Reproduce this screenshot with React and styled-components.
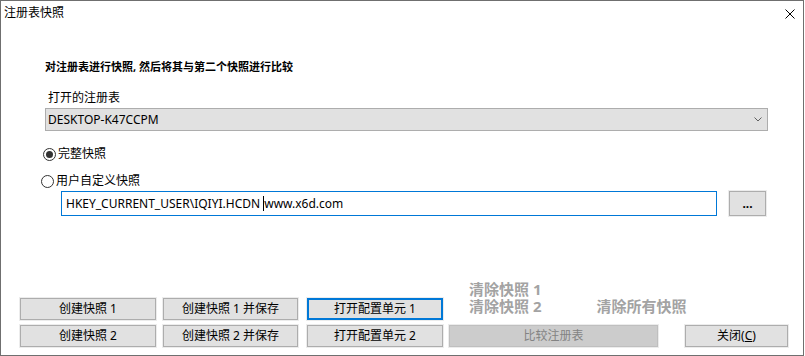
import React from 'react'
import styled, { createGlobalStyle } from 'styled-components'

const GlobalStyle = createGlobalStyle`
  html, body {
    margin: 0;
    padding: 0;
    background: #fff;
  }
  body {
    font-family: "Noto Sans", "Noto Sans CJK SC", sans-serif;
    font-size: 12px;
    color: #000;
  }
`

const Window = styled.div`
  box-sizing: border-box;
  width: 804px;
  height: 356px;
  border: 1px solid #6f6f6f;
  background: #fff;
  display: flex;
  flex-direction: column;
`

const TitleBar = styled.div`
  height: 24px;
  display: flex;
  align-items: center;
  justify-content: space-between;
  padding: 0 8px 0 3px;
`

const Title = styled.div`
  font-size: 12px;
  line-height: 16px;
`

const CloseIcon = styled.svg`
  width: 10px;
  height: 10px;
  margin-top: 2px;
`

const Content = styled.div`
  padding-left: 44px;
  display: flex;
  flex-direction: column;
  align-items: flex-start;
`

const Intro = styled.div`
  margin-top: 34px;
  font-size: 11px;
  font-weight: bold;
  line-height: 16px;
`

const FieldLabel = styled.div`
  margin: 15px 0 0 3px;
  line-height: 16px;
`

const Combo = styled.div`
  box-sizing: border-box;
  margin-top: 2px;
  width: 723px;
  height: 23px;
  border: 1px solid #adadad;
  background: #e1e1e1;
  display: flex;
  align-items: center;
  justify-content: space-between;
  padding: 0 5px 0 2px;
`

const Radio = styled.div`
  display: flex;
  align-items: center;
  gap: 2px;
  line-height: 16px;
  margin-top: ${p => p.$top}px;
  margin-left: ${p => p.$shift}px;
`

const RadioMark = styled.span`
  box-sizing: border-box;
  width: 13px;
  height: 13px;
  border: 1px solid #333;
  border-radius: 50%;
  display: flex;
  align-items: center;
  justify-content: center;

  &::after {
    content: '';
    width: 7px;
    height: 7px;
    border-radius: 50%;
    background: ${p => (p.$checked ? '#333' : 'transparent')};
  }
`

const PathRow = styled.div`
  display: flex;
  margin: 2px 0 0 16px;
`

const PathInput = styled.div`
  box-sizing: border-box;
  width: 656px;
  height: 25px;
  border: 1px solid #0078d7;
  padding-left: 4px;
  line-height: 23px;
  white-space: pre;
`

const Caret = styled.span`
  display: inline-block;
  width: 1px;
  height: 15px;
  background: #000;
  vertical-align: -3px;
`

const Button = styled.button`
  box-sizing: border-box;
  width: ${p => p.$w}px;
  height: ${p => p.$h || 22}px;
  margin: 0 0 0 ${p => p.$gap || 0}px;
  padding: 0;
  border: ${p => (p.$focused ? '2px solid #0078d7' : `1px solid ${p.disabled ? '#bfbfbf' : '#adadad'}`)};
  box-shadow: 0 0 0 1px #ececec;
  background: ${p => (p.disabled ? '#cccccc' : '#e1e1e1')};
  color: ${p => (p.disabled ? '#838383' : '#000')};
  font-family: "Noto Sans", "Noto Sans CJK SC", sans-serif;
  font-size: 12px;
  font-weight: ${p => (p.$bold ? 'bold' : 'normal')};
  line-height: 16px;
  white-space: pre;
`

const Footer = styled.div`
  margin-top: auto;
  padding: 0 0 8px 19px;
  display: flex;
  flex-direction: column;
  gap: 5px;
`

const ButtonRow = styled.div`
  display: flex;
  align-items: flex-end;
`

const ClearArea = styled.div`
  margin-left: 26px;
  padding-bottom: 5px;
  display: flex;
  flex-direction: column;
`

const ClearLine = styled.div`
  display: flex;
  gap: 55px;
`

const ClearLink = styled.span`
  font-size: 15px;
  font-weight: bold;
  line-height: 17px;
  color: #a3a3a3;
  white-space: pre;
`

export default function App () {
  return (
    <>
      <GlobalStyle />
      <Window>
        <TitleBar>
          <Title>注册表快照</Title>
          <CloseIcon viewBox="0 0 10 10">
            <path d="M0.5 0.5 L9.5 9.5 M9.5 0.5 L0.5 9.5" stroke="#000" strokeWidth="1" fill="none" />
          </CloseIcon>
        </TitleBar>

        <Content>
          <Intro>对注册表进行快照, 然后将其与第二个快照进行比较</Intro>
          <FieldLabel>打开的注册表</FieldLabel>
          <Combo>
            <span>DESKTOP-K47CCPM</span>
            <svg width="8" height="5" viewBox="0 0 8 5">
              <path d="M0.5 0.5 L4 4 L7.5 0.5" stroke="#606060" strokeWidth="1" fill="none" />
            </svg>
          </Combo>

          <Radio $top={15} $shift={-2}>
            <RadioMark $checked />
            <span>完整快照</span>
          </Radio>
          <Radio $top={11} $shift={-4}>
            <RadioMark />
            <span>用户自定义快照</span>
          </Radio>

          <PathRow>
            <PathInput>HKEY_CURRENT_USER\IQIYI.HCDN <Caret />www.x6d.com</PathInput>
            <Button $w={37} $h={25} $gap={12} $bold>...</Button>
          </PathRow>
        </Content>

        <Footer>
          <ButtonRow>
            <Button $w={136}>创建快照 1</Button>
            <Button $w={135} $gap={7}>创建快照 1 并保存</Button>
            <Button $w={136} $gap={9} $focused>打开配置单元 1</Button>
            <ClearArea>
              <ClearLink>清除快照 1</ClearLink>
              <ClearLine>
                <ClearLink>清除快照 2</ClearLink>
                <ClearLink>清除所有快照</ClearLink>
              </ClearLine>
            </ClearArea>
          </ButtonRow>
          <ButtonRow>
            <Button $w={136}>创建快照 2</Button>
            <Button $w={135} $gap={7}>创建快照 2 并保存</Button>
            <Button $w={136} $gap={9}>打开配置单元 2</Button>
            <Button $w={209} $gap={6} disabled>比较注册表</Button>
            <Button $w={103} $gap={27}>关闭(<u>C</u>)</Button>
          </ButtonRow>
        </Footer>
      </Window>
    </>
  )
}
